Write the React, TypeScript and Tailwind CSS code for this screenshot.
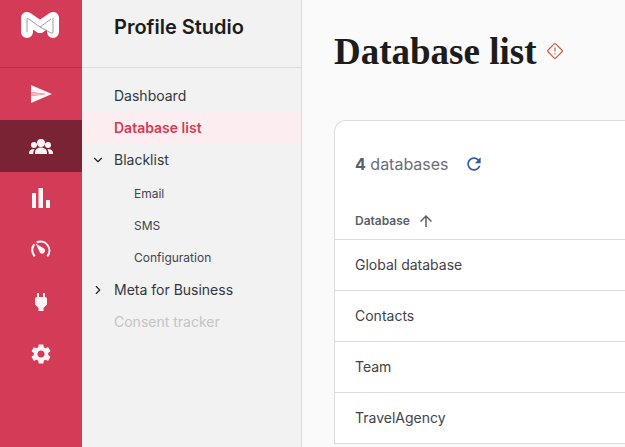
import { ChevronDown, ChevronRight } from "lucide-react";

const railIcons = [
  "M2.01 21 23 12 2.01 3 2 10l15 2-15 2z",
  "M12 5a4 4 0 1 1 0 8 4 4 0 0 1 0-8zM5 8a3 3 0 1 1 0 6 3 3 0 0 1 0-6zM19 8a3 3 0 1 1 0 6 3 3 0 0 1 0-6zM6 20v-1.5c0-3 2.7-5 6-5s6 2 6 5V20zM0 20v-1c0-2 1.8-3.7 4-3.7.6 0 1.2.1 1.7.3-.9 1-1.4 2.2-1.4 3.6V20zM24 20v-1c0-2-1.8-3.7-4-3.7-.6 0-1.2.1-1.7.3.9 1 1.4 2.2 1.4 3.6V20z",
  "M3 7h4v15H3zM9.5 2h4.5v20H9.5zM17 14h4v8h-4z",
  "M5 19A9.9 9.9 0 0 1 4.6 5.6L6.1 7A7.8 7.8 0 0 0 6.5 17.5zM7 3.7A9.9 9.9 0 0 1 19 19L17.5 17.5A7.8 7.8 0 0 0 8.4 5.3zM6.6 5.6 15 10.6A2.8 2.8 0 1 1 11 14.8z",
  "M16.01 7 16 3h-2v4h-4V3H8v4h-.01C7 6.99 6 7.99 6 8.99v5.49L9.5 18v3h5v-3l3.5-3.51v-5.5c0-1-1-2-1.99-1.99z",
  "M19.14 12.94c.04-.3.06-.61.06-.94 0-.32-.02-.64-.07-.94l2.03-1.58c.18-.14.23-.41.12-.61l-1.92-3.32c-.12-.22-.37-.29-.59-.22l-2.39.96c-.5-.38-1.03-.7-1.62-.94l-.36-2.54c-.04-.24-.24-.41-.48-.41h-3.84c-.24 0-.43.17-.47.41l-.36 2.54c-.59.24-1.13.57-1.62.94l-2.39-.96c-.22-.08-.47 0-.59.22L2.74 8.87c-.12.21-.08.47.12.61l2.03 1.58c-.05.3-.09.63-.09.94s.02.64.07.94l-2.03 1.58c-.18.14-.23.41-.12.61l1.92 3.32c.12.22.37.29.59.22l2.39-.96c.5.38 1.03.7 1.62.94l.36 2.54c.05.24.24.41.48.41h3.84c.24 0 .44-.17.47-.41l.36-2.54c.59-.24 1.13-.56 1.62-.94l2.39.96c.22.08.47 0 .59-.22l1.92-3.32c.12-.22.07-.47-.12-.61l-2.01-1.58zM12 15.6c-1.98 0-3.6-1.62-3.6-3.6s1.62-3.6 3.6-3.6 3.6 1.62 3.6 3.6-1.62 3.6-3.6 3.6z",
];

const databases = ["Global database", "Contacts", "Team", "TravelAgency"];

function Logo() {
  return (
    <svg width="40" height="28" viewBox="0 0 40 28" fill="none">
      <path d="M7 7v14M7 7l13 9 13-9M33 7v14" stroke="#fff" strokeWidth="12" strokeLinecap="round" strokeLinejoin="round" />
      <path d="M7 21V8q0-1 1-.5L20 16 31 8M20 16l11 6q2 .5 2-1V7" stroke="#8d7f84" strokeWidth="0.8" />
    </svg>
  );
}

function NavItem({ label, active, muted, sub, icon }: { label: string; active?: boolean; muted?: boolean; sub?: boolean; icon?: React.ReactNode }) {
  return (
    <div className={`relative flex h-8 items-center ${sub ? "pl-[52px] text-xs text-[#3f4450]" : "pl-8 text-sm"} ${active ? "bg-[#fceef0] font-semibold text-[#d63a55]" : ""} ${muted ? "text-[#c4c4c6]" : ""} ${!active && !muted && !sub ? "text-[#32363f]" : ""}`}>
      {icon && <span className="absolute left-[9px] top-[9px] text-[#23262d]">{icon}</span>}
      {label}
    </div>
  );
}

export default function App() {
  return (
    <div className="flex h-[447px] w-[625px] overflow-hidden bg-[#fafafa] font-['Inter',sans-serif]">
      <div className="flex w-[82px] shrink-0 flex-col bg-[#d33b56]">
        <div className="flex h-[68px] items-start justify-center border-b border-[#b92f48] pt-[11px] pr-[2px]">
          <Logo />
        </div>
        {railIcons.map((d, i) => (
          <div key={i} className={`flex h-[52px] items-center justify-center ${i === 1 ? "bg-[#7a2335]" : ""}`}>
            <svg width="24" height="24" viewBox="0 0 24 24" fill="#fff5f6">
              <path d={d} />
              {i === 0 && <path d="M2 10l15 2-15 2z" fill="#f5b5c1" />}
            </svg>
          </div>
        ))}
      </div>

      <div className="w-[220px] shrink-0 border-r border-[#dcdcdc] bg-[#f2f2f2]">
        <div className="h-[68px] border-b border-[#dcdcdc] pl-8 pt-[13px] text-xl leading-7 font-semibold text-[#1c1c1e]">Profile Studio</div>
        <div className="pt-3">
          <NavItem label="Dashboard" />
          <NavItem label="Database list" active />
          <NavItem label="Blacklist" icon={<ChevronDown size={14} strokeWidth={2} />} />
          <div className="pt-[2px]">
            <NavItem label="Email" sub />
            <NavItem label="SMS" sub />
            <NavItem label="Configuration" sub />
            <NavItem label="Meta for Business" icon={<ChevronRight size={14} strokeWidth={2} />} />
            <NavItem label="Consent tracker" muted />
          </div>
        </div>
      </div>

      <div className="min-w-0 flex-1 pl-8">
        <div className="flex h-[120px] items-start gap-[11px] pt-[30px]">
          <h1 className="font-['Liberation_Serif',serif] text-[37px] leading-11 font-bold text-[#1c1c1c]">Database list</h1>
          <svg className="mt-[13px]" width="16" height="16" viewBox="0 0 16 16" fill="none" stroke="#cf5c3f" strokeWidth="1.2">
            <rect x="2.5" y="2.5" width="11" height="11" rx="1" transform="rotate(45 8 8)" />
            <path d="M8 4.4v4.2M8 10.2v1.2" />
          </svg>
        </div>
        <div className="w-[340px] rounded-tl-xl border-t border-l border-[#dcdcdc] bg-white">
          <div className="flex h-[86px] items-center gap-[15px] pl-5 text-base text-[#6b6e76]">
            <span><b className="font-bold text-[#5c5f66]">4</b> databases</span>
            <svg width="20" height="20" viewBox="0 0 24 24" fill="#2f5d9c">
              <path d="M17.65 6.35C16.2 4.9 14.21 4 12 4c-4.42 0-7.99 3.58-7.99 8s3.57 8 7.99 8c3.73 0 6.84-2.55 7.73-6h-2.08c-.82 2.33-3.04 4-5.65 4-3.31 0-6-2.69-6-6s2.69-6 6-6c1.66 0 3.14.69 4.22 1.78L13 11h7V4l-2.35 2.35z" />
            </svg>
          </div>
          <div className="flex h-[33px] items-center gap-[7px] border-b border-[#dcdcdc] pb-1 pl-5 text-xs font-semibold text-[#5c5f66]">
            <span>Database</span>
            <svg width="18" height="18" viewBox="0 0 24 24" fill="#5c5f66">
              <path d="M4 12l1.41 1.41L11 7.83V20h2V7.83l5.58 5.59L20 12l-8-8-8 8z" />
            </svg>
          </div>
          {databases.map((name) => (
            <div key={name} className="flex h-[51px] items-center border-b border-[#dcdcdc] pl-5 text-sm text-[#3f4248]">{name}</div>
          ))}
        </div>
      </div>
    </div>
  );
}
